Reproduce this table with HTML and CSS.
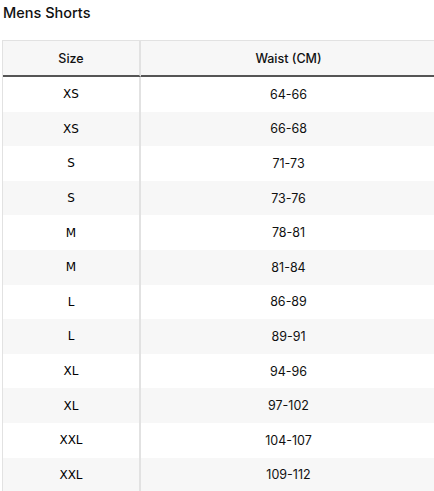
FILE: index.html
```html
<!DOCTYPE html>
<html>
<head>
<meta charset="utf-8">
<link rel="stylesheet" href="styles.css">
</head>
<body>
<h3 class="title">Mens Shorts</h3>
<table class="chart">
  <thead>
    <tr><th class="c1">Size</th><th class="c2">Waist (CM)</th></tr>
  </thead>
  <tbody>
    <tr><td class="c1">XS</td><td class="c2">64-66</td></tr>
    <tr><td class="c1">XS</td><td class="c2">66-68</td></tr>
    <tr><td class="c1">S</td><td class="c2">71-73</td></tr>
    <tr><td class="c1">S</td><td class="c2">73-76</td></tr>
    <tr><td class="c1">M</td><td class="c2">78-81</td></tr>
    <tr><td class="c1">M</td><td class="c2">81-84</td></tr>
    <tr><td class="c1">L</td><td class="c2">86-89</td></tr>
    <tr><td class="c1">L</td><td class="c2">89-91</td></tr>
    <tr><td class="c1">XL</td><td class="c2">94-96</td></tr>
    <tr><td class="c1">XL</td><td class="c2">97-102</td></tr>
    <tr><td class="c1">XXL</td><td class="c2">104-107</td></tr>
    <tr><td class="c1">XXL</td><td class="c2">109-112</td></tr>
  </tbody>
</table>
</body>
</html>
```
FILE: styles.css
```css
html, body {
  margin: 0;
  padding: 0;
  background: #fff;
  overflow: hidden;
}
body {
  padding: 0 0 0 2px;
  font-family: "Open Sans", sans-serif;
  color: #111;
}
.title {
  margin: 0;
  padding: 3px 0 0 1px;
  height: 40px;
  box-sizing: border-box;
  font-family: Inter, sans-serif;
  font-weight: 500;
  font-size: 14.5px;
  line-height: 20px;
  color: #111;
}
.chart {
  width: 434px;
  border-collapse: separate;
  border-spacing: 0;
  border-top: 1px solid #e2e2e2;
  border-left: 1px solid #e2e2e2;
  table-layout: fixed;
}
.chart th, .chart td {
  text-align: center;
  padding: 0;
}
.chart th {
  height: 34px;
  background: #f7f7f7;
  border-bottom: 2px solid #555;
  font-family: Inter, sans-serif;
  font-weight: 500;
  font-size: 12.5px;
  color: #111;
}
.chart th.c1, .chart td.c1 {
  width: 136px;
  border-right: 2px solid #e2e2e2;
}
.chart td {
  height: 34.6px;
  font-size: 12px;
}
.chart td.c1 {
  font-family: "DejaVu Sans", sans-serif;
  font-size: 12px;
  color: #000;
}
.chart td.c2 {
  font-family: Inter, sans-serif;
  font-size: 12.5px;
}
.chart tbody tr:nth-child(even) td {
  background: #f7f7f7;
}
```
